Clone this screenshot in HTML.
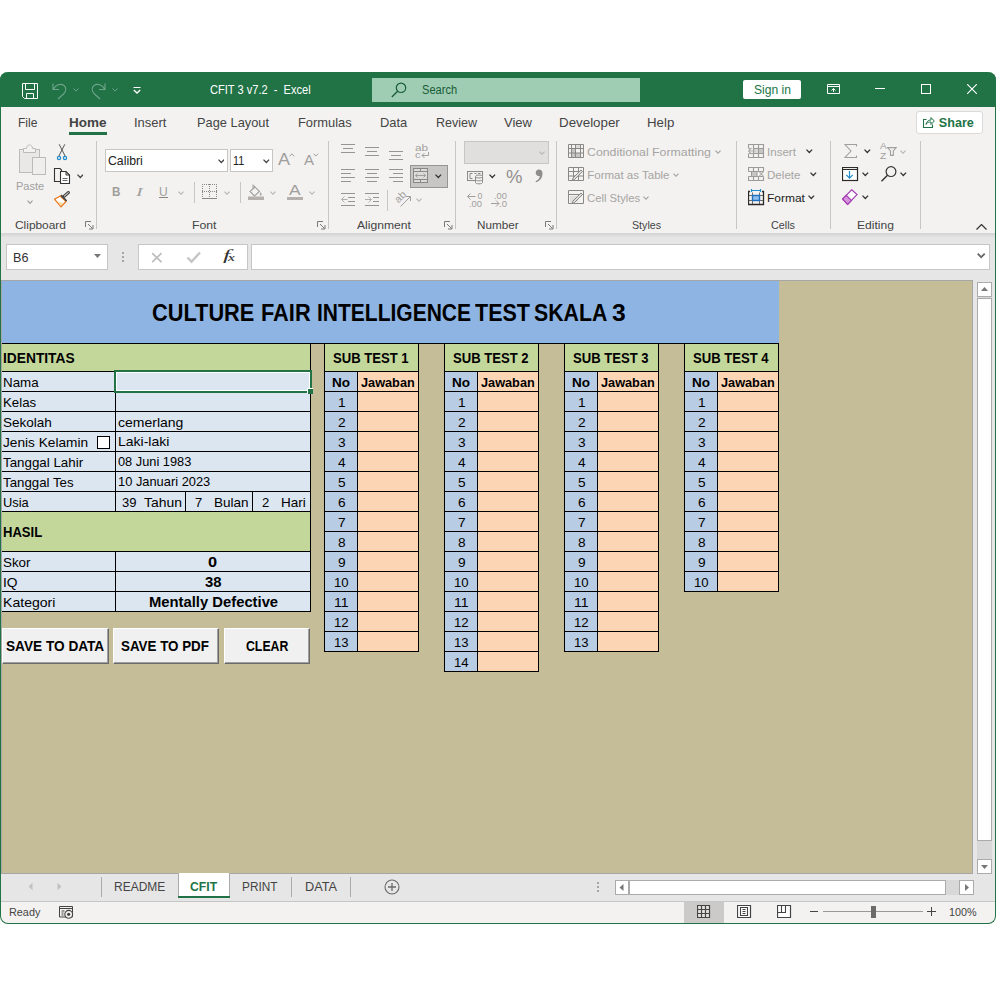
<!DOCTYPE html>
<html><head><meta charset="utf-8"><title>CFIT 3 v7.2 - Excel</title>
<style>
html,body{margin:0;padding:0;background:#fff;}
body{width:996px;height:996px;position:relative;overflow:hidden;font-family:"Liberation Sans",sans-serif;}
#win{position:absolute;left:0;top:72px;width:996px;height:852px;border-radius:8px;overflow:hidden;background:#f3f2f1;}
#in{position:absolute;left:0;top:-72px;width:996px;height:996px;}
#frame{position:absolute;left:0;top:72px;width:996px;height:852px;box-sizing:border-box;border:1px solid #217346;border-top:none;border-radius:8px;pointer-events:none;}
.r{position:absolute;display:block;}
.t{position:absolute;white-space:pre;line-height:1;transform-origin:0 50%;}
</style></head><body>
<div id="win"><div id="in">
<div class="r" style="left:0px;top:72px;width:996px;height:35px;background:#217346;"></div>
<svg class="r" style="left:22px;top:83px;" width="17" height="17" viewBox="0 0 17 17"><path d="M0.5 0.5h15v15h-13l-2-2z M3.5 0.5v6h9v-6 M4.5 15.5v-5h7v5" fill="none" stroke="#fff" stroke-width="1"/></svg>
<svg class="r" style="left:52px;top:82px;" width="17" height="18" viewBox="0 0 17 18"><path d="M1 1.5v6h6 M1.5 7c2-4 7-6 10.500-3.500c3 2.500 2 6-0.500 8.500l-5.500 5" fill="none" stroke="#6ea58a" stroke-width="1.1"/></svg>
<svg class="r" style="left:72.5px;top:88px;" width="7" height="5" viewBox="0 0 7 5"><path d="M0.500 0.500l2.600 2.500l2.600-2.500" fill="none" stroke="#6ea58a" stroke-width="1"/></svg>
<svg class="r" style="left:88.5px;top:82px;" width="17" height="18" viewBox="0 0 17 18"><path d="M16 1.500v6h-6 M15.500 7c-2-4-7-6-10.500-3.500c-3 2.500-2 6 0.500 8.500l5.500 5" fill="none" stroke="#6ea58a" stroke-width="1.1"/></svg>
<svg class="r" style="left:111.5px;top:88px;" width="7" height="5" viewBox="0 0 7 5"><path d="M0.500 0.500l2.600 2.500l2.600-2.500" fill="none" stroke="#6ea58a" stroke-width="1"/></svg>
<svg class="r" style="left:132.5px;top:86px;" width="8" height="8" viewBox="0 0 8 8"><path d="M0.500 1.500h7" stroke="#fff" stroke-width="1.100" fill="none"/><path d="M0.800 4l3.200 3l3.200-3" fill="none" stroke="#fff" stroke-width="1.300"/></svg>
<span class="t" style="left:209.51px;top:84.00px;font-size:12.3px;color:#fff;transform:scaleX(0.9002);">CFIT 3 v7.2  -  Excel</span>
<div class="r" style="left:372px;top:78px;width:268px;height:24px;background:#9fcdb3;"></div>
<svg class="r" style="left:391px;top:82px;" width="16" height="16" viewBox="0 0 16 16"><circle cx="10" cy="5.800" r="4.700" fill="none" stroke="#185c37" stroke-width="1.200"/><path d="M6.600 9.200l-5.800 5.800" stroke="#185c37" stroke-width="1.300"/></svg>
<span class="t" style="left:421.91px;top:84.00px;font-size:12.3px;color:#185c37;transform:scaleX(0.9003);">Search</span>
<div class="r" style="left:743px;top:80px;width:58px;height:19px;background:#fff;border-radius:2px;"></div>
<span class="t" style="left:753.51px;top:84.00px;font-size:12.3px;color:#217346;transform:scaleX(0.9834);">Sign in</span>
<svg class="r" style="left:827px;top:84px;" width="14" height="11" viewBox="0 0 14 11"><path d="M0.500 0.500h12v9h-12z M0.500 2.500h12" fill="none" stroke="#fff" stroke-width="1"/><path d="M6.500 8v-3.500 M4.500 6.500l2-2l2 2" fill="none" stroke="#fff" stroke-width="1"/></svg>
<div class="r" style="left:875px;top:88px;width:10px;height:1px;background:#fff;"></div>
<div class="r" style="left:921px;top:84px;width:10px;height:10px;border:1px solid #fff;box-sizing:border-box;"></div>
<svg class="r" style="left:967px;top:84px;" width="10" height="10" viewBox="0 0 10 10"><path d="M0 0l10 10M10 0l-10 10" stroke="#fff" stroke-width="1.100"/></svg>
<div class="r" style="left:0px;top:107px;width:996px;height:126px;background:#f3f2f1;"></div>
<span class="t" style="left:17.80px;top:117.00px;font-size:12.6px;color:#444444;transform:scaleX(0.9562);">File</span>
<span class="t" style="left:133.80px;top:117.00px;font-size:12.6px;color:#444444;transform:scaleX(1.0288);">Insert</span>
<span class="t" style="left:196.50px;top:117.00px;font-size:12.6px;color:#444444;transform:scaleX(1.0180);">Page Layout</span>
<span class="t" style="left:297.50px;top:117.00px;font-size:12.6px;color:#444444;transform:scaleX(1.0233);">Formulas</span>
<span class="t" style="left:379.90px;top:117.00px;font-size:12.6px;color:#444444;transform:scaleX(1.0263);">Data</span>
<span class="t" style="left:435.50px;top:117.00px;font-size:12.6px;color:#444444;transform:scaleX(0.9930);">Review</span>
<span class="t" style="left:503.50px;top:117.00px;font-size:12.6px;color:#444444;transform:scaleX(1.0343);">View</span>
<span class="t" style="left:558.70px;top:117.00px;font-size:12.6px;color:#444444;transform:scaleX(1.0593);">Developer</span>
<span class="t" style="left:646.80px;top:117.00px;font-size:12.6px;color:#444444;transform:scaleX(1.0541);">Help</span>
<span class="t" style="left:69.00px;top:117.00px;font-size:12.6px;font-weight:700;color:#444;transform:scaleX(1.0717);">Home</span>
<div class="r" style="left:69px;top:132px;width:38px;height:3px;background:#217346;"></div>
<div class="r" style="left:915.5px;top:110.5px;width:67px;height:23px;background:#fff;border:1px solid #dcdad8;box-sizing:border-box;border-radius:3px;"></div>
<svg class="r" style="left:923px;top:116px;" width="12" height="12" viewBox="0 0 12 12"><path d="M3.500 3.500h-3v8h9v-3" fill="none" stroke="#217346" stroke-width="1.100"/><path d="M3 8.500c0.500-3 2.500-4.500 5-4.500v-2.500l3.300 3.500l-3.300 3.500v-2.500c-2 0-3.500 0.500-5 2z" fill="none" stroke="#217346" stroke-width="1"/></svg>
<span class="t" style="left:938.80px;top:117.00px;font-size:12.6px;font-weight:700;color:#217346;">Share</span>
<svg class="r" style="left:19px;top:144px;" width="28" height="32" viewBox="0 0 28 32"><rect x="0.500" y="5.500" width="20" height="23" fill="#e9e8e7" stroke="#bdbbb9"/><path d="M4.500 8.500v-4h3c0-4.700 6-4.700 6 0h3v4z" fill="#f3f2f1" stroke="#bdbbb9"/><rect x="13.500" y="13.500" width="13" height="17" fill="#efeeed" stroke="#bdbbb9"/></svg>
<span class="t" style="left:16.03px;top:181.00px;font-size:11.8px;color:#a19f9d;transform:scaleX(0.9361);">Paste</span>
<svg class="r" style="left:26.5px;top:200px;" width="6" height="5" viewBox="0 0 6 5"><path d="M0.500 0.600l2.5 2.7l2.5 -2.7" fill="none" stroke="#a19f9d" stroke-width="1.2"/></svg>
<svg class="r" style="left:56px;top:144px;" width="12" height="17" viewBox="0 0 12 17"><path d="M3.200 0.300l6.200 12.300 M8.800 0.300l-6.200 12.300" fill="none" stroke="#555" stroke-width="1"/><circle cx="3" cy="14" r="1.600" fill="none" stroke="#1e8bcd" stroke-width="1.200"/><circle cx="9" cy="14" r="1.600" fill="none" stroke="#1e8bcd" stroke-width="1.200"/></svg>
<svg class="r" style="left:53px;top:167px;" width="18" height="18" viewBox="0 0 18 18"><path d="M7 14.500h-5.500v-13h5.500l1.500 1.500v1.500" fill="none" stroke="#333" stroke-width="1.100"/><path d="M7.500 4.500h5.500l3.500 3.500v8.500h-9z" fill="#fff" stroke="#333" stroke-width="1.100"/><path d="M13 4.500v3.500h3.500" fill="none" stroke="#333"/><path d="M9.500 11.500h5 M9.500 13.500h5" fill="none" stroke="#666"/></svg>
<svg class="r" style="left:76.5px;top:174px;" width="6.5" height="5.2" viewBox="0 0 6.5 5.2"><path d="M0.500 0.600l2.8 2.9l2.8 -2.9" fill="none" stroke="#444444" stroke-width="1.3"/></svg>
<svg class="r" style="left:54px;top:191px;" width="17" height="17" viewBox="0 0 17 17"><path d="M6.300 5l-5.800 3.200l6.500 7.600l5-5.300z" fill="#fff" stroke="#e8791d" stroke-width="1.300"/><path d="M3.500 10.500l3.500 4l2.500-2.500z" fill="#fbd9a5"/><path d="M14.300 1.600l-4.600 4" stroke="#444" stroke-width="3.200" stroke-linecap="round"/><path d="M14.300 1.600l-4 3.500" stroke="#f3f2f1" stroke-width="1" stroke-linecap="round"/><path d="M7 4.200l5.600 5.800" stroke="#444" stroke-width="1.700"/></svg>
<span class="t" style="left:15.24px;top:219.00px;font-size:11.6px;color:#444444;transform:scaleX(1.0263);">Clipboard</span>
<svg class="r" style="left:84.5px;top:220.5px;" width="9" height="9" viewBox="0 0 9 9"><path d="M0.500 6v-5.500h5.500" fill="none" stroke="#7a7978" stroke-width="1"/><path d="M3 3l4.500 4.500 M8 4v4h-4" fill="none" stroke="#7a7978" stroke-width="1"/></svg>
<div class="r" style="left:96px;top:141px;width:1px;height:88px;background:#c8c6c4;"></div>
<div class="r" style="left:105px;top:149px;width:123px;height:23px;background:#fff;border:1px solid #c8c6c4;box-sizing:border-box;"></div>
<span class="t" style="left:107.90px;top:155.00px;font-size:12.4px;color:#222;transform:scaleX(0.9905);">Calibri</span>
<svg class="r" style="left:217.8px;top:159px;" width="6.5" height="5.2" viewBox="0 0 6.5 5.2"><path d="M0.500 0.600l2.8 2.9l2.8 -2.9" fill="none" stroke="#444444" stroke-width="1.3"/></svg>
<div class="r" style="left:230px;top:149px;width:43px;height:23px;background:#fff;border:1px solid #c8c6c4;box-sizing:border-box;"></div>
<span class="t" style="left:233.40px;top:155.00px;font-size:12.4px;color:#222;transform:scaleX(0.8693);">11</span>
<svg class="r" style="left:263.0px;top:159px;" width="6.5" height="5.2" viewBox="0 0 6.5 5.2"><path d="M0.500 0.600l2.8 2.9l2.8 -2.9" fill="none" stroke="#444444" stroke-width="1.3"/></svg>
<span class="t" style="left:278.12px;top:151.00px;font-size:17px;color:#a19f9d;transform:scaleX(1.0631);">A</span>
<svg class="r" style="left:289px;top:152.5px;" width="6" height="4" viewBox="0 0 6 4"><path d="M0.500 3.300l2.300-2.500l2.300 2.500" fill="none" stroke="#a19f9d" stroke-width="1"/></svg>
<span class="t" style="left:304.04px;top:153.00px;font-size:14px;color:#a19f9d;transform:scaleX(1.0724);">A</span>
<svg class="r" style="left:313px;top:152.5px;" width="6" height="4" viewBox="0 0 6 4"><path d="M0.500 0.600l2.300 2.500l2.300-2.500" fill="none" stroke="#a19f9d" stroke-width="1"/></svg>
<span class="t" style="left:112.18px;top:185.00px;font-size:13px;font-weight:700;color:#a19f9d;transform:scaleX(0.8988);">B</span>
<span class="t" style="left:136.46px;top:185.00px;font-size:13.5px;font-style:italic;color:#a19f9d;transform:scaleX(1.5067);font-family:'Liberation Serif';">I</span>
<span class="t" style="left:159.29px;top:186.00px;font-size:12.8px;color:#a19f9d;transform:scaleX(0.9431);">U</span>
<div class="r" style="left:159px;top:197px;width:9px;height:1px;background:#8a8886;"></div>
<svg class="r" style="left:178.4px;top:191px;" width="6" height="5" viewBox="0 0 6 5"><path d="M0.500 0.600l2.5 2.7l2.5 -2.7" fill="none" stroke="#b5b3b1" stroke-width="1.1"/></svg>
<div class="r" style="left:194px;top:182px;width:1px;height:21px;background:#c8c6c4;"></div>
<svg class="r" style="left:202px;top:184px;" width="16" height="16" viewBox="0 0 16 16"><path d="M0.500 0v14 M7.500 0v14 M14.500 0v14 M0 0.500h15 M0 7.500h15" fill="none" stroke="#8a8886" stroke-width="1" stroke-dasharray="1 1" shape-rendering="crispEdges"/><path d="M0 14.500h15" stroke="#8a8886" stroke-width="1.300" shape-rendering="crispEdges"/></svg>
<svg class="r" style="left:224.3px;top:191px;" width="6" height="5" viewBox="0 0 6 5"><path d="M0.500 0.600l2.5 2.7l2.5 -2.7" fill="none" stroke="#b5b3b1" stroke-width="1.1"/></svg>
<div class="r" style="left:240px;top:182px;width:1px;height:21px;background:#c8c6c4;"></div>
<svg class="r" style="left:248px;top:184px;" width="16" height="16" viewBox="0 0 16 16"><path d="M5.500 1.500l6 6l-5 4.500l-4.500-4.500l5-4.500" fill="none" stroke="#a19f9d" stroke-width="1.100"/><path d="M5 0.500v4" stroke="#a19f9d" stroke-width="1"/><path d="M12.500 8c1.500 2 1.500 3.500 0.300 3.500c-1.200 0-1.200-1.500-0.300-3.500z" fill="#a19f9d"/><rect x="0" y="12.500" width="16" height="3.500" fill="#b3b0ad"/></svg>
<svg class="r" style="left:270.3px;top:191px;" width="6" height="5" viewBox="0 0 6 5"><path d="M0.500 0.600l2.5 2.7l2.5 -2.7" fill="none" stroke="#b5b3b1" stroke-width="1.1"/></svg>
<span class="t" style="left:289.42px;top:183.00px;font-size:14.5px;color:#a19f9d;transform:scaleX(1.2056);">A</span>
<div class="r" style="left:287px;top:196.5px;width:16px;height:3.5px;background:#b3b0ad;"></div>
<svg class="r" style="left:309.2px;top:191px;" width="6" height="5" viewBox="0 0 6 5"><path d="M0.500 0.600l2.5 2.7l2.5 -2.7" fill="none" stroke="#b5b3b1" stroke-width="1.1"/></svg>
<span class="t" style="left:191.94px;top:219.00px;font-size:11.6px;color:#444444;transform:scaleX(1.0571);">Font</span>
<svg class="r" style="left:316.5px;top:220.5px;" width="9" height="9" viewBox="0 0 9 9"><path d="M0.500 6v-5.500h5.500" fill="none" stroke="#7a7978" stroke-width="1"/><path d="M3 3l4.500 4.500 M8 4v4h-4" fill="none" stroke="#7a7978" stroke-width="1"/></svg>
<div class="r" style="left:328px;top:141px;width:1px;height:88px;background:#c8c6c4;"></div>
<div class="r" style="left:341.0px;top:144px;width:14px;height:1px;background:#979593;"></div>
<div class="r" style="left:343.0px;top:148px;width:10px;height:1px;background:#979593;"></div>
<div class="r" style="left:341.0px;top:152px;width:14px;height:1px;background:#979593;"></div>
<div class="r" style="left:365.0px;top:147px;width:14px;height:1px;background:#979593;"></div>
<div class="r" style="left:367.0px;top:151px;width:10px;height:1px;background:#979593;"></div>
<div class="r" style="left:365.0px;top:155px;width:14px;height:1px;background:#979593;"></div>
<div class="r" style="left:389.0px;top:151px;width:14px;height:1px;background:#979593;"></div>
<div class="r" style="left:391.0px;top:155px;width:10px;height:1px;background:#979593;"></div>
<div class="r" style="left:389.0px;top:159px;width:14px;height:1px;background:#979593;"></div>
<span class="t" style="left:415.22px;top:143.00px;font-size:9.5px;color:#a19f9d;transform:scaleX(1.2441);">ab</span>
<span class="t" style="left:415.22px;top:150.00px;font-size:9.5px;color:#a19f9d;transform:scaleX(1.1916);">c</span>
<svg class="r" style="left:421px;top:152px;" width="9" height="8" viewBox="0 0 9 8"><path d="M7.500 0v3.500h-6.500 M3.500 1l-2.500 2.500l2.500 2.500" fill="none" stroke="#a19f9d" stroke-width="1"/></svg>
<div class="r" style="left:341px;top:169px;width:14px;height:1px;background:#979593;"></div>
<div class="r" style="left:341px;top:173px;width:10px;height:1px;background:#979593;"></div>
<div class="r" style="left:341px;top:177px;width:14px;height:1px;background:#979593;"></div>
<div class="r" style="left:341px;top:181px;width:10px;height:1px;background:#979593;"></div>
<div class="r" style="left:365.0px;top:169px;width:14px;height:1px;background:#979593;"></div>
<div class="r" style="left:367.0px;top:173px;width:10px;height:1px;background:#979593;"></div>
<div class="r" style="left:365.0px;top:177px;width:14px;height:1px;background:#979593;"></div>
<div class="r" style="left:367.0px;top:181px;width:10px;height:1px;background:#979593;"></div>
<div class="r" style="left:389px;top:169px;width:14px;height:1px;background:#979593;"></div>
<div class="r" style="left:393px;top:173px;width:10px;height:1px;background:#979593;"></div>
<div class="r" style="left:389px;top:177px;width:14px;height:1px;background:#979593;"></div>
<div class="r" style="left:393px;top:181px;width:10px;height:1px;background:#979593;"></div>
<div class="r" style="left:410px;top:165px;width:38px;height:23px;background:#c8c6c4;border:1px solid #979593;box-sizing:border-box;"></div>
<svg class="r" style="left:413px;top:168px;" width="16" height="16" viewBox="0 0 16 16"><rect x="0.500" y="0.500" width="14" height="14" fill="#dddbd9" stroke="#8a8886"/><path d="M0.500 3.500h14 M0.500 11.500h14 M7.500 0.500v3 M7.500 11.500v3" fill="none" stroke="#8a8886" stroke-width="1"/><path d="M2.500 7.500h10 M4.500 5.500l-2 2l2 2 M10.500 5.500l2 2l-2 2" fill="none" stroke="#a19f9d" stroke-width="1"/></svg>
<svg class="r" style="left:435.0px;top:174px;" width="6.5" height="5.2" viewBox="0 0 6.5 5.2"><path d="M0.500 0.600l2.8 2.9l2.8 -2.9" fill="none" stroke="#333" stroke-width="1.3"/></svg>
<div class="r" style="left:341px;top:193px;width:14px;height:1px;background:#979593;"></div>
<div class="r" style="left:341px;top:205px;width:14px;height:1px;background:#979593;"></div>
<div class="r" style="left:348px;top:197px;width:7px;height:1px;background:#979593;"></div>
<div class="r" style="left:348px;top:201px;width:7px;height:1px;background:#979593;"></div>
<svg class="r" style="left:341px;top:195px;" width="7" height="9" viewBox="0 0 7 9"><path d="M6.500 4.500h-6 M3.500 1.500l-3 3l3 3" fill="none" stroke="#b1afad" stroke-width="1"/></svg>
<div class="r" style="left:365px;top:193px;width:14px;height:1px;background:#979593;"></div>
<div class="r" style="left:365px;top:205px;width:14px;height:1px;background:#979593;"></div>
<div class="r" style="left:373px;top:197px;width:6px;height:1px;background:#979593;"></div>
<div class="r" style="left:373px;top:201px;width:6px;height:1px;background:#979593;"></div>
<svg class="r" style="left:365px;top:195px;" width="8" height="9" viewBox="0 0 8 9"><path d="M0 4.500h6.500 M3.500 1.500l3 3l-3 3" fill="none" stroke="#b1afad" stroke-width="1"/></svg>
<div class="r" style="left:387px;top:190px;width:1px;height:21px;background:#c8c6c4;"></div>
<svg class="r" style="left:394px;top:188px;" width="20" height="20" viewBox="0 0 20 20"><path d="M6.500 18.500l10-10 M12 8.500h4.500v4.500" fill="none" stroke="#a19f9d" stroke-width="1"/><text x="0" y="0" font-family="Liberation Sans" font-size="10.500" fill="#a19f9d" transform="translate(4.500 15.500) rotate(-45)">ab</text></svg>
<svg class="r" style="left:415.7px;top:198px;" width="6" height="5" viewBox="0 0 6 5"><path d="M0.500 0.600l2.5 2.7l2.5 -2.7" fill="none" stroke="#b5b3b1" stroke-width="1.1"/></svg>
<span class="t" style="left:356.54px;top:219.00px;font-size:11.6px;color:#444444;transform:scaleX(1.0459);">Alignment</span>
<svg class="r" style="left:443.6px;top:220.5px;" width="9" height="9" viewBox="0 0 9 9"><path d="M0.500 6v-5.500h5.500" fill="none" stroke="#7a7978" stroke-width="1"/><path d="M3 3l4.500 4.500 M8 4v4h-4" fill="none" stroke="#7a7978" stroke-width="1"/></svg>
<div class="r" style="left:455px;top:141px;width:1px;height:88px;background:#c8c6c4;"></div>
<div class="r" style="left:464px;top:141px;width:85px;height:23px;background:#e1dfdd;border:1px solid #c8c6c4;box-sizing:border-box;"></div>
<svg class="r" style="left:539.1px;top:151px;" width="6" height="5" viewBox="0 0 6 5"><path d="M0.500 0.600l2.5 2.7l2.5 -2.7" fill="none" stroke="#b5b3b1" stroke-width="1.1"/></svg>
<svg class="r" style="left:467px;top:171px;" width="17" height="14" viewBox="0 0 17 14"><rect x="0.500" y="0.500" width="15" height="9" fill="none" stroke="#8f8d8b" stroke-width="1.100"/><path d="M5.500 2.500h-2.500v5h2.500 M7.500 2.500h2 M11 2.500h2.500" fill="none" stroke="#8f8d8b"/><path d="M8.500 5.500v6c0 1.800 7 1.800 7 0v-6" fill="#f3f2f1" stroke="none"/><ellipse cx="12" cy="5.500" rx="3.500" ry="1.500" fill="#f3f2f1" stroke="#8f8d8b"/><path d="M8.500 5.500v6c0 1.800 7 1.800 7 0v-6 M8.500 8.500c0 1.800 7 1.800 7 0" fill="none" stroke="#8f8d8b"/></svg>
<svg class="r" style="left:489.1px;top:174px;" width="6.5" height="5.2" viewBox="0 0 6.5 5.2"><path d="M0.500 0.600l2.8 2.9l2.8 -2.9" fill="none" stroke="#333" stroke-width="1.3"/></svg>
<span class="t" style="left:505.68px;top:168.00px;font-size:18px;color:#918f8d;transform:scaleX(1.0265);">%</span>
<svg class="r" style="left:534px;top:169px;" width="10" height="14" viewBox="0 0 10 14"><path d="M5 0.500a3.300 3.300 0 1 0 0.800 6.500c-0.300 2.500-1.800 4.300-4.300 5.200l0.500 1c4-1.200 6.500-4.500 6.500-8.800c0-2.400-1.500-3.900-3.500-3.900z" fill="#8f8d8b"/></svg>
<svg class="r" style="left:467px;top:193px;" width="9" height="8" viewBox="0 0 9 8"><path d="M8.500 3.500h-8 M3.500 0.500l-3 3l3 3" fill="none" stroke="#a19f9d"/></svg>
<span class="t" style="left:477.45px;top:192.00px;font-size:8.8px;color:#a19f9d;">0</span>
<span class="t" style="left:469.25px;top:200.00px;font-size:8.8px;color:#a19f9d;transform:scaleX(1.0711);">.00</span>
<span class="t" style="left:493.55px;top:192.00px;font-size:8.8px;color:#a19f9d;transform:scaleX(1.0629);">.00</span>
<svg class="r" style="left:491px;top:200px;" width="9" height="8" viewBox="0 0 9 8"><path d="M0 3.500h8 M5 0.500l3 3l-3 3" fill="none" stroke="#a19f9d"/></svg>
<span class="t" style="left:498.65px;top:200.00px;font-size:8.8px;color:#a19f9d;transform:scaleX(1.0763);">.0</span>
<span class="t" style="left:477.24px;top:219.00px;font-size:11.6px;color:#444444;transform:scaleX(1.0092);">Number</span>
<svg class="r" style="left:545px;top:220.5px;" width="9" height="9" viewBox="0 0 9 9"><path d="M0.500 6v-5.500h5.500" fill="none" stroke="#7a7978" stroke-width="1"/><path d="M3 3l4.500 4.500 M8 4v4h-4" fill="none" stroke="#7a7978" stroke-width="1"/></svg>
<div class="r" style="left:556px;top:141px;width:1px;height:88px;background:#c8c6c4;"></div>
<svg class="r" style="left:568px;top:144px;" width="17" height="15" viewBox="0 0 17 15"><path d="M3.500 5h4v4h5v4h-9z" fill="#c8c6c4"/><path d="M7.500 1h5v4h-5z" fill="#dddbd9"/><path d="M0.500 0.500h15v13h-15z M0.500 4.500h15 M0.500 9h15 M3.500 0.500v13 M7.500 0.500v13 M12.500 0.500v13" fill="none" stroke="#8a8886"/></svg>
<span class="t" style="left:587.24px;top:147.00px;font-size:11.5px;color:#a6a4a2;transform:scaleX(1.0710);">Conditional Formatting</span>
<svg class="r" style="left:714.5px;top:150px;" width="6" height="5" viewBox="0 0 6 5"><path d="M0.500 0.600l2.5 2.7l2.5 -2.7" fill="none" stroke="#a19f9d" stroke-width="1.1"/></svg>
<svg class="r" style="left:568px;top:167px;" width="17" height="15" viewBox="0 0 17 15"><path d="M0.500 0.500h15v13h-15z M0.500 4.500h15 M0.500 9h15 M5.500 0.500v13 M10.500 0.500v13" fill="none" stroke="#8a8886"/><path d="M14.500 4.500l-8 8l-2.500 1l1-2.500l8-8z" fill="#e1dfdd" stroke="#8a8886"/></svg>
<span class="t" style="left:587.24px;top:170.00px;font-size:11.5px;color:#a6a4a2;">Format as Table</span>
<svg class="r" style="left:672.8px;top:173px;" width="6" height="5" viewBox="0 0 6 5"><path d="M0.500 0.600l2.5 2.7l2.5 -2.7" fill="none" stroke="#a19f9d" stroke-width="1.1"/></svg>
<svg class="r" style="left:568px;top:189.5px;" width="17" height="15" viewBox="0 0 17 15"><path d="M0.500 0.500h15v13h-15z M0.500 4.500h15" fill="none" stroke="#8a8886"/><path d="M2 6h8v6h-8z" fill="#e1dfdd"/><path d="M14.500 4.500l-8 8l-2.500 1l1-2.500l8-8z" fill="#e1dfdd" stroke="#8a8886"/></svg>
<span class="t" style="left:587.24px;top:193.00px;font-size:11.5px;color:#a6a4a2;transform:scaleX(0.9796);">Cell Styles</span>
<svg class="r" style="left:643.3px;top:196px;" width="6" height="5" viewBox="0 0 6 5"><path d="M0.500 0.600l2.5 2.7l2.5 -2.7" fill="none" stroke="#a19f9d" stroke-width="1.1"/></svg>
<span class="t" style="left:631.94px;top:219.00px;font-size:11.6px;color:#444444;transform:scaleX(0.9192);">Styles</span>
<div class="r" style="left:736px;top:141px;width:1px;height:88px;background:#c8c6c4;"></div>
<svg class="r" style="left:748px;top:144px;" width="17" height="15" viewBox="0 0 17 15"><rect x="5.500" y="4.500" width="5" height="5" fill="#dddbd9"/><rect x="10.500" y="4.500" width="5" height="5" fill="#c8c6c4"/><path d="M0.500 4v-3.500h15v13h-15v-3.500 M5.500 0.500v13 M10.500 0.500v13 M5.500 4.500h10 M0.500 9.500h15 M0.500 4.500h2" fill="none" stroke="#9d9b99" stroke-width="1.100"/><path d="M0.500 7h7 M3.500 4l-3 3l3 3" fill="none" stroke="#b1afad" stroke-width="1.100"/></svg>
<span class="t" style="left:767.34px;top:147.00px;font-size:11.5px;color:#a6a4a2;transform:scaleX(1.0054);">Insert</span>
<svg class="r" style="left:806.1px;top:149px;" width="6.5" height="5.2" viewBox="0 0 6.5 5.2"><path d="M0.500 0.600l2.8 2.9l2.8 -2.9" fill="none" stroke="#333" stroke-width="1.3"/></svg>
<svg class="r" style="left:748px;top:167px;" width="17" height="15" viewBox="0 0 17 15"><path d="M0.500 4.500v-4h15v4 M0.500 9.500v4h15v-4 M0.500 4.500h15 M0.500 9.500h15 M5.500 0.500v4 M10.500 0.500v4 M5.500 9.500v4 M10.500 9.500v4" fill="none" stroke="#9d9b99" stroke-width="1.100"/><rect x="3.500" y="4.500" width="5.500" height="5" fill="#c8c6c4" stroke="#9d9b99"/><path d="M11 4.300l4.700 5.400 M15.700 4.300l-4.700 5.400" stroke="#b1afad" stroke-width="1.100"/></svg>
<span class="t" style="left:767.34px;top:170.00px;font-size:11.5px;color:#a6a4a2;transform:scaleX(1.0081);">Delete</span>
<svg class="r" style="left:810.2px;top:172px;" width="6.5" height="5.2" viewBox="0 0 6.5 5.2"><path d="M0.500 0.600l2.8 2.9l2.8 -2.9" fill="none" stroke="#333" stroke-width="1.3"/></svg>
<svg class="r" style="left:748px;top:189px;" width="17" height="17" viewBox="0 0 17 17"><path d="M3 1.500h10 M3.500 0v3 M12.500 0v3" stroke="#1e8bcd" stroke-width="1.200" fill="none"/><path d="M4.500 3.500v12 M11.500 3.500v12 M0.500 6.500h15 M0.500 11.500h15" fill="none" stroke="#6e6c6a"/><path d="M2 2.500h-1.500v13h15v-13h-1.500" fill="none" stroke="#2b2a29" stroke-width="1.300"/><rect x="4.500" y="6.500" width="7" height="5" fill="#8ebdea" stroke="#1e6fc0" stroke-width="1.400"/></svg>
<span class="t" style="left:767.33px;top:193.00px;font-size:11.8px;color:#222;transform:scaleX(1.0152);">Format</span>
<svg class="r" style="left:808.3px;top:195px;" width="6.5" height="5.2" viewBox="0 0 6.5 5.2"><path d="M0.500 0.600l2.8 2.9l2.8 -2.9" fill="none" stroke="#333" stroke-width="1.3"/></svg>
<span class="t" style="left:770.94px;top:219.00px;font-size:11.6px;color:#444444;transform:scaleX(0.9320);">Cells</span>
<div class="r" style="left:830px;top:141px;width:1px;height:88px;background:#c8c6c4;"></div>
<svg class="r" style="left:843.5px;top:144px;" width="14" height="14" viewBox="0 0 14 14"><path d="M12.500 2.500v-2h-11.500l6 6.500l-6 6.500h11.500v-2" fill="none" stroke="#a19f9d" stroke-width="1.100"/></svg>
<svg class="r" style="left:864.0px;top:149px;" width="6.5" height="5.2" viewBox="0 0 6.5 5.2"><path d="M0.500 0.600l2.8 2.9l2.8 -2.9" fill="none" stroke="#333" stroke-width="1.3"/></svg>
<span class="t" style="left:879.86px;top:142.00px;font-size:8.4px;color:#a19f9d;transform:scaleX(1.1928);">A</span>
<span class="t" style="left:880.06px;top:152.00px;font-size:8.4px;color:#a19f9d;transform:scaleX(1.2238);">Z</span>
<svg class="r" style="left:887px;top:147px;" width="10" height="10" viewBox="0 0 10 10"><path d="M0.600 0.600h8.600l-2.900 3.400v4.400h-2.800v-4.400z" fill="none" stroke="#a19f9d" stroke-width="1.100"/></svg>
<svg class="r" style="left:900.3px;top:150px;" width="6" height="5" viewBox="0 0 6 5"><path d="M0.500 0.600l2.5 2.7l2.5 -2.7" fill="none" stroke="#b5b3b1" stroke-width="1.1"/></svg>
<svg class="r" style="left:842px;top:167px;" width="17" height="15" viewBox="0 0 17 15"><rect x="0.500" y="0.500" width="15" height="13" fill="#fff" stroke="#2b2a29" stroke-width="1.200"/><path d="M0.500 2.500h15" stroke="#2b2a29"/><path d="M7.500 4v7 M4.300 7.800l3.200 3.300l3.200-3.300" fill="none" stroke="#1e8bcd" stroke-width="1.200"/></svg>
<svg class="r" style="left:862.2px;top:172px;" width="6.5" height="5.2" viewBox="0 0 6.5 5.2"><path d="M0.500 0.600l2.8 2.9l2.8 -2.9" fill="none" stroke="#333" stroke-width="1.3"/></svg>
<svg class="r" style="left:880.5px;top:166px;" width="17" height="16" viewBox="0 0 17 16"><circle cx="10" cy="5.600" r="4.900" fill="none" stroke="#333" stroke-width="1.200"/><path d="M6.500 9.300l-6 6" stroke="#333" stroke-width="1.400"/></svg>
<svg class="r" style="left:900.4px;top:172px;" width="6.5" height="5.2" viewBox="0 0 6.5 5.2"><path d="M0.500 0.600l2.8 2.9l2.8 -2.9" fill="none" stroke="#333" stroke-width="1.3"/></svg>
<svg class="r" style="left:842px;top:189px;" width="17" height="17" viewBox="0 0 17 17"><path d="M9.700 0.800l5.300 4.800l-9.400 9.700l-5-5.300z" fill="#fff" stroke="#a33fb0" stroke-width="1.200"/><path d="M4.200 6.300l5.200 5.100l-3.800 3.900l-5-5.300z" fill="#d694de" stroke="#a33fb0" stroke-width="1.200"/></svg>
<svg class="r" style="left:862.2px;top:195px;" width="6.5" height="5.2" viewBox="0 0 6.5 5.2"><path d="M0.500 0.600l2.8 2.9l2.8 -2.9" fill="none" stroke="#333" stroke-width="1.3"/></svg>
<span class="t" style="left:857.04px;top:219.00px;font-size:11.6px;color:#444444;transform:scaleX(1.0388);">Editing</span>
<div class="r" style="left:920px;top:141px;width:1px;height:88px;background:#c8c6c4;"></div>
<svg class="r" style="left:976px;top:224px;" width="11" height="6" viewBox="0 0 11 6"><path d="M0.500 5.500l5-5l5 5" fill="none" stroke="#333" stroke-width="1.200"/></svg>
<div class="r" style="left:0px;top:233px;width:996px;height:47px;background:#e6e6e6;"></div>
<div class="r" style="left:0px;top:233px;width:996px;height:5px;background:linear-gradient(#d3d3d3,#e6e6e6);"></div>
<div class="r" style="left:6px;top:244px;width:102px;height:26px;background:#fff;border:1px solid #c6c6c6;box-sizing:border-box;"></div>
<span class="t" style="left:13.02px;top:252.00px;font-size:12px;color:#333;transform:scaleX(1.0526);">B6</span>
<svg class="r" style="left:94px;top:254px;" width="8" height="5" viewBox="0 0 8 5"><path d="M0 0h7l-3.500 4z" fill="#777"/></svg>
<div class="r" style="left:122px;top:252px;width:2px;height:2px;background:#a6a6a6;"></div>
<div class="r" style="left:122px;top:256px;width:2px;height:2px;background:#a6a6a6;"></div>
<div class="r" style="left:122px;top:260px;width:2px;height:2px;background:#a6a6a6;"></div>
<div class="r" style="left:138px;top:244px;width:110px;height:26px;background:#fff;border:1px solid #c6c6c6;box-sizing:border-box;"></div>
<svg class="r" style="left:151px;top:252px;" width="12" height="11" viewBox="0 0 12 11"><path d="M1.200 1.200l9.300 9 M10.500 1.200l-9.300 9" stroke="#bdbdbd" stroke-width="1.700" fill="none"/></svg>
<svg class="r" style="left:186px;top:251px;" width="16" height="13" viewBox="0 0 16 13"><path d="M1.500 6.500l4 4.200l8.500-9.200" stroke="#c6c6c6" stroke-width="2.400" fill="none"/></svg>
<span class="t" style="left:223.00px;top:248.00px;font-size:15px;font-style:italic;color:#333;transform:scaleX(1.7738);font-family:'Liberation Serif';">f</span>
<span class="t" style="left:228.38px;top:253.00px;font-size:10.5px;font-weight:700;font-style:italic;color:#444;transform:scaleX(1.3029);font-family:'Liberation Serif';">x</span>
<div class="r" style="left:251px;top:244px;width:739px;height:26px;background:#fff;border:1px solid #c6c6c6;box-sizing:border-box;"></div>
<svg class="r" style="left:977px;top:253px;" width="9" height="6" viewBox="0 0 9 6"><path d="M0.700 0.700l3.500 3.500l3.500-3.500" fill="none" stroke="#666" stroke-width="1.800"/></svg>
<div class="r" style="left:1px;top:280px;width:972px;height:594px;background:#a6a6a6;"></div>
<div class="r" style="left:2px;top:281px;width:970px;height:592px;background:#c4bd97;"></div>
<div class="r" style="left:2px;top:281px;width:777px;height:62px;background:#8db4e2;"></div>
<span class="t" style="left:151.53px;top:301.00px;font-size:24.2px;font-weight:700;transform:scaleX(0.8995);">CULTURE</span>
<span class="t" style="left:260.73px;top:301.00px;font-size:24.2px;font-weight:700;transform:scaleX(0.9007);">FAIR</span>
<span class="t" style="left:317.23px;top:301.00px;font-size:24.2px;font-weight:700;transform:scaleX(0.8683);">INTELLIGENCE</span>
<span class="t" style="left:474.83px;top:301.00px;font-size:24.2px;font-weight:700;transform:scaleX(0.8885);">TEST</span>
<span class="t" style="left:534.13px;top:301.00px;font-size:24.2px;font-weight:700;transform:scaleX(0.8791);">SKALA</span>
<span class="t" style="left:611.93px;top:301.00px;font-size:24.2px;font-weight:700;transform:scaleX(1.0210);">3</span>
<div class="r" style="left:2px;top:344px;width:308px;height:27px;background:#c4d79b;"></div>
<div class="r" style="left:2px;top:372px;width:308px;height:139px;background:#dce6f1;"></div>
<div class="r" style="left:2px;top:512px;width:308px;height:39px;background:#c4d79b;"></div>
<div class="r" style="left:2px;top:552px;width:308px;height:59px;background:#dce6f1;"></div>
<div class="r" style="left:2px;top:343px;width:777px;height:1px;background:#000;"></div>
<div class="r" style="left:2px;top:371px;width:309px;height:1px;background:#000;"></div>
<div class="r" style="left:2px;top:391px;width:309px;height:1px;background:#000;"></div>
<div class="r" style="left:2px;top:411px;width:309px;height:1px;background:#000;"></div>
<div class="r" style="left:2px;top:431px;width:309px;height:1px;background:#000;"></div>
<div class="r" style="left:2px;top:451px;width:309px;height:1px;background:#000;"></div>
<div class="r" style="left:2px;top:471px;width:309px;height:1px;background:#000;"></div>
<div class="r" style="left:2px;top:491px;width:309px;height:1px;background:#000;"></div>
<div class="r" style="left:2px;top:511px;width:309px;height:1px;background:#000;"></div>
<div class="r" style="left:2px;top:551px;width:309px;height:1px;background:#000;"></div>
<div class="r" style="left:2px;top:571px;width:309px;height:1px;background:#000;"></div>
<div class="r" style="left:2px;top:591px;width:309px;height:1px;background:#000;"></div>
<div class="r" style="left:2px;top:611px;width:309px;height:1px;background:#000;"></div>
<div class="r" style="left:310px;top:343px;width:1px;height:269px;background:#000;"></div>
<div class="r" style="left:115px;top:371px;width:1px;height:140px;background:#000;"></div>
<div class="r" style="left:115px;top:551px;width:1px;height:60px;background:#000;"></div>
<div class="r" style="left:185px;top:491px;width:1px;height:20px;background:#000;"></div>
<div class="r" style="left:252px;top:491px;width:1px;height:20px;background:#000;"></div>
<div class="r" style="left:325px;top:344px;width:93px;height:27px;background:#c4d79b;"></div>
<div class="r" style="left:325px;top:372px;width:32px;height:279px;background:#b8cce4;"></div>
<div class="r" style="left:358px;top:372px;width:60px;height:19px;background:#fcd5b4;"></div>
<div class="r" style="left:358px;top:392px;width:60px;height:259px;background:#fcd5b4;"></div>
<div class="r" style="left:324px;top:343px;width:1px;height:309px;background:#000;"></div>
<div class="r" style="left:418px;top:343px;width:1px;height:309px;background:#000;"></div>
<div class="r" style="left:357px;top:371px;width:1px;height:281px;background:#000;"></div>
<div class="r" style="left:324px;top:371px;width:95px;height:1px;background:#000;"></div>
<div class="r" style="left:324px;top:391px;width:95px;height:1px;background:#000;"></div>
<div class="r" style="left:324px;top:411px;width:95px;height:1px;background:#000;"></div>
<div class="r" style="left:324px;top:431px;width:95px;height:1px;background:#000;"></div>
<div class="r" style="left:324px;top:451px;width:95px;height:1px;background:#000;"></div>
<div class="r" style="left:324px;top:471px;width:95px;height:1px;background:#000;"></div>
<div class="r" style="left:324px;top:491px;width:95px;height:1px;background:#000;"></div>
<div class="r" style="left:324px;top:511px;width:95px;height:1px;background:#000;"></div>
<div class="r" style="left:324px;top:531px;width:95px;height:1px;background:#000;"></div>
<div class="r" style="left:324px;top:551px;width:95px;height:1px;background:#000;"></div>
<div class="r" style="left:324px;top:571px;width:95px;height:1px;background:#000;"></div>
<div class="r" style="left:324px;top:591px;width:95px;height:1px;background:#000;"></div>
<div class="r" style="left:324px;top:611px;width:95px;height:1px;background:#000;"></div>
<div class="r" style="left:324px;top:631px;width:95px;height:1px;background:#000;"></div>
<div class="r" style="left:324px;top:651px;width:95px;height:1px;background:#000;"></div>
<span class="t" style="left:333.24px;top:351.00px;font-size:14px;font-weight:700;transform:scaleX(0.9347);">SUB TEST 1</span>
<span class="t" style="left:331.97px;top:376.00px;font-size:13.2px;font-weight:700;transform:scaleX(1.0263);">No</span>
<span class="t" style="left:361.47px;top:376.00px;font-size:13.2px;font-weight:700;transform:scaleX(0.9648);">Jawaban</span>
<span class="t" style="left:337.79px;top:397.00px;font-size:12.8px;transform:scaleX(1.0700);">1</span>
<span class="t" style="left:337.79px;top:417.00px;font-size:12.8px;transform:scaleX(1.0700);">2</span>
<span class="t" style="left:337.79px;top:437.00px;font-size:12.8px;transform:scaleX(1.0700);">3</span>
<span class="t" style="left:337.79px;top:457.00px;font-size:12.8px;transform:scaleX(1.0700);">4</span>
<span class="t" style="left:337.79px;top:477.00px;font-size:12.8px;transform:scaleX(1.0700);">5</span>
<span class="t" style="left:337.79px;top:497.00px;font-size:12.8px;transform:scaleX(1.0700);">6</span>
<span class="t" style="left:337.79px;top:517.00px;font-size:12.8px;transform:scaleX(1.0700);">7</span>
<span class="t" style="left:337.79px;top:537.00px;font-size:12.8px;transform:scaleX(1.0700);">8</span>
<span class="t" style="left:337.79px;top:557.00px;font-size:12.8px;transform:scaleX(1.0700);">9</span>
<span class="t" style="left:334.29px;top:577.00px;font-size:12.8px;transform:scaleX(1.0274);">10</span>
<span class="t" style="left:334.29px;top:597.00px;font-size:12.8px;transform:scaleX(1.0998);">11</span>
<span class="t" style="left:334.29px;top:617.00px;font-size:12.8px;transform:scaleX(1.0274);">12</span>
<span class="t" style="left:334.29px;top:637.00px;font-size:12.8px;transform:scaleX(1.0274);">13</span>
<div class="r" style="left:445px;top:344px;width:93px;height:27px;background:#c4d79b;"></div>
<div class="r" style="left:445px;top:372px;width:32px;height:299px;background:#b8cce4;"></div>
<div class="r" style="left:478px;top:372px;width:60px;height:19px;background:#fcd5b4;"></div>
<div class="r" style="left:478px;top:392px;width:60px;height:279px;background:#fcd5b4;"></div>
<div class="r" style="left:444px;top:343px;width:1px;height:329px;background:#000;"></div>
<div class="r" style="left:538px;top:343px;width:1px;height:329px;background:#000;"></div>
<div class="r" style="left:477px;top:371px;width:1px;height:301px;background:#000;"></div>
<div class="r" style="left:444px;top:371px;width:95px;height:1px;background:#000;"></div>
<div class="r" style="left:444px;top:391px;width:95px;height:1px;background:#000;"></div>
<div class="r" style="left:444px;top:411px;width:95px;height:1px;background:#000;"></div>
<div class="r" style="left:444px;top:431px;width:95px;height:1px;background:#000;"></div>
<div class="r" style="left:444px;top:451px;width:95px;height:1px;background:#000;"></div>
<div class="r" style="left:444px;top:471px;width:95px;height:1px;background:#000;"></div>
<div class="r" style="left:444px;top:491px;width:95px;height:1px;background:#000;"></div>
<div class="r" style="left:444px;top:511px;width:95px;height:1px;background:#000;"></div>
<div class="r" style="left:444px;top:531px;width:95px;height:1px;background:#000;"></div>
<div class="r" style="left:444px;top:551px;width:95px;height:1px;background:#000;"></div>
<div class="r" style="left:444px;top:571px;width:95px;height:1px;background:#000;"></div>
<div class="r" style="left:444px;top:591px;width:95px;height:1px;background:#000;"></div>
<div class="r" style="left:444px;top:611px;width:95px;height:1px;background:#000;"></div>
<div class="r" style="left:444px;top:631px;width:95px;height:1px;background:#000;"></div>
<div class="r" style="left:444px;top:651px;width:95px;height:1px;background:#000;"></div>
<div class="r" style="left:444px;top:671px;width:95px;height:1px;background:#000;"></div>
<span class="t" style="left:453.24px;top:351.00px;font-size:14px;font-weight:700;transform:scaleX(0.9347);">SUB TEST 2</span>
<span class="t" style="left:451.97px;top:376.00px;font-size:13.2px;font-weight:700;transform:scaleX(1.0263);">No</span>
<span class="t" style="left:481.47px;top:376.00px;font-size:13.2px;font-weight:700;transform:scaleX(0.9648);">Jawaban</span>
<span class="t" style="left:457.79px;top:397.00px;font-size:12.8px;transform:scaleX(1.0700);">1</span>
<span class="t" style="left:457.79px;top:417.00px;font-size:12.8px;transform:scaleX(1.0700);">2</span>
<span class="t" style="left:457.79px;top:437.00px;font-size:12.8px;transform:scaleX(1.0700);">3</span>
<span class="t" style="left:457.79px;top:457.00px;font-size:12.8px;transform:scaleX(1.0700);">4</span>
<span class="t" style="left:457.79px;top:477.00px;font-size:12.8px;transform:scaleX(1.0700);">5</span>
<span class="t" style="left:457.79px;top:497.00px;font-size:12.8px;transform:scaleX(1.0700);">6</span>
<span class="t" style="left:457.79px;top:517.00px;font-size:12.8px;transform:scaleX(1.0700);">7</span>
<span class="t" style="left:457.79px;top:537.00px;font-size:12.8px;transform:scaleX(1.0700);">8</span>
<span class="t" style="left:457.79px;top:557.00px;font-size:12.8px;transform:scaleX(1.0700);">9</span>
<span class="t" style="left:454.29px;top:577.00px;font-size:12.8px;transform:scaleX(1.0274);">10</span>
<span class="t" style="left:454.29px;top:597.00px;font-size:12.8px;transform:scaleX(1.0998);">11</span>
<span class="t" style="left:454.29px;top:617.00px;font-size:12.8px;transform:scaleX(1.0274);">12</span>
<span class="t" style="left:454.29px;top:637.00px;font-size:12.8px;transform:scaleX(1.0274);">13</span>
<span class="t" style="left:454.29px;top:657.00px;font-size:12.8px;transform:scaleX(1.0274);">14</span>
<div class="r" style="left:565px;top:344px;width:93px;height:27px;background:#c4d79b;"></div>
<div class="r" style="left:565px;top:372px;width:32px;height:279px;background:#b8cce4;"></div>
<div class="r" style="left:598px;top:372px;width:60px;height:19px;background:#fcd5b4;"></div>
<div class="r" style="left:598px;top:392px;width:60px;height:259px;background:#fcd5b4;"></div>
<div class="r" style="left:564px;top:343px;width:1px;height:309px;background:#000;"></div>
<div class="r" style="left:658px;top:343px;width:1px;height:309px;background:#000;"></div>
<div class="r" style="left:597px;top:371px;width:1px;height:281px;background:#000;"></div>
<div class="r" style="left:564px;top:371px;width:95px;height:1px;background:#000;"></div>
<div class="r" style="left:564px;top:391px;width:95px;height:1px;background:#000;"></div>
<div class="r" style="left:564px;top:411px;width:95px;height:1px;background:#000;"></div>
<div class="r" style="left:564px;top:431px;width:95px;height:1px;background:#000;"></div>
<div class="r" style="left:564px;top:451px;width:95px;height:1px;background:#000;"></div>
<div class="r" style="left:564px;top:471px;width:95px;height:1px;background:#000;"></div>
<div class="r" style="left:564px;top:491px;width:95px;height:1px;background:#000;"></div>
<div class="r" style="left:564px;top:511px;width:95px;height:1px;background:#000;"></div>
<div class="r" style="left:564px;top:531px;width:95px;height:1px;background:#000;"></div>
<div class="r" style="left:564px;top:551px;width:95px;height:1px;background:#000;"></div>
<div class="r" style="left:564px;top:571px;width:95px;height:1px;background:#000;"></div>
<div class="r" style="left:564px;top:591px;width:95px;height:1px;background:#000;"></div>
<div class="r" style="left:564px;top:611px;width:95px;height:1px;background:#000;"></div>
<div class="r" style="left:564px;top:631px;width:95px;height:1px;background:#000;"></div>
<div class="r" style="left:564px;top:651px;width:95px;height:1px;background:#000;"></div>
<span class="t" style="left:573.24px;top:351.00px;font-size:14px;font-weight:700;transform:scaleX(0.9347);">SUB TEST 3</span>
<span class="t" style="left:571.97px;top:376.00px;font-size:13.2px;font-weight:700;transform:scaleX(1.0263);">No</span>
<span class="t" style="left:601.47px;top:376.00px;font-size:13.2px;font-weight:700;transform:scaleX(0.9648);">Jawaban</span>
<span class="t" style="left:577.79px;top:397.00px;font-size:12.8px;transform:scaleX(1.0700);">1</span>
<span class="t" style="left:577.79px;top:417.00px;font-size:12.8px;transform:scaleX(1.0700);">2</span>
<span class="t" style="left:577.79px;top:437.00px;font-size:12.8px;transform:scaleX(1.0700);">3</span>
<span class="t" style="left:577.79px;top:457.00px;font-size:12.8px;transform:scaleX(1.0700);">4</span>
<span class="t" style="left:577.79px;top:477.00px;font-size:12.8px;transform:scaleX(1.0700);">5</span>
<span class="t" style="left:577.79px;top:497.00px;font-size:12.8px;transform:scaleX(1.0700);">6</span>
<span class="t" style="left:577.79px;top:517.00px;font-size:12.8px;transform:scaleX(1.0700);">7</span>
<span class="t" style="left:577.79px;top:537.00px;font-size:12.8px;transform:scaleX(1.0700);">8</span>
<span class="t" style="left:577.79px;top:557.00px;font-size:12.8px;transform:scaleX(1.0700);">9</span>
<span class="t" style="left:574.29px;top:577.00px;font-size:12.8px;transform:scaleX(1.0274);">10</span>
<span class="t" style="left:574.29px;top:597.00px;font-size:12.8px;transform:scaleX(1.0998);">11</span>
<span class="t" style="left:574.29px;top:617.00px;font-size:12.8px;transform:scaleX(1.0274);">12</span>
<span class="t" style="left:574.29px;top:637.00px;font-size:12.8px;transform:scaleX(1.0274);">13</span>
<div class="r" style="left:685px;top:344px;width:93px;height:27px;background:#c4d79b;"></div>
<div class="r" style="left:685px;top:372px;width:32px;height:219px;background:#b8cce4;"></div>
<div class="r" style="left:718px;top:372px;width:60px;height:19px;background:#fcd5b4;"></div>
<div class="r" style="left:718px;top:392px;width:60px;height:199px;background:#fcd5b4;"></div>
<div class="r" style="left:684px;top:343px;width:1px;height:249px;background:#000;"></div>
<div class="r" style="left:778px;top:343px;width:1px;height:249px;background:#000;"></div>
<div class="r" style="left:717px;top:371px;width:1px;height:221px;background:#000;"></div>
<div class="r" style="left:684px;top:371px;width:95px;height:1px;background:#000;"></div>
<div class="r" style="left:684px;top:391px;width:95px;height:1px;background:#000;"></div>
<div class="r" style="left:684px;top:411px;width:95px;height:1px;background:#000;"></div>
<div class="r" style="left:684px;top:431px;width:95px;height:1px;background:#000;"></div>
<div class="r" style="left:684px;top:451px;width:95px;height:1px;background:#000;"></div>
<div class="r" style="left:684px;top:471px;width:95px;height:1px;background:#000;"></div>
<div class="r" style="left:684px;top:491px;width:95px;height:1px;background:#000;"></div>
<div class="r" style="left:684px;top:511px;width:95px;height:1px;background:#000;"></div>
<div class="r" style="left:684px;top:531px;width:95px;height:1px;background:#000;"></div>
<div class="r" style="left:684px;top:551px;width:95px;height:1px;background:#000;"></div>
<div class="r" style="left:684px;top:571px;width:95px;height:1px;background:#000;"></div>
<div class="r" style="left:684px;top:591px;width:95px;height:1px;background:#000;"></div>
<span class="t" style="left:693.24px;top:351.00px;font-size:14px;font-weight:700;transform:scaleX(0.9347);">SUB TEST 4</span>
<span class="t" style="left:691.97px;top:376.00px;font-size:13.2px;font-weight:700;transform:scaleX(1.0263);">No</span>
<span class="t" style="left:721.47px;top:376.00px;font-size:13.2px;font-weight:700;transform:scaleX(0.9648);">Jawaban</span>
<span class="t" style="left:697.79px;top:397.00px;font-size:12.8px;transform:scaleX(1.0700);">1</span>
<span class="t" style="left:697.79px;top:417.00px;font-size:12.8px;transform:scaleX(1.0700);">2</span>
<span class="t" style="left:697.79px;top:437.00px;font-size:12.8px;transform:scaleX(1.0700);">3</span>
<span class="t" style="left:697.79px;top:457.00px;font-size:12.8px;transform:scaleX(1.0700);">4</span>
<span class="t" style="left:697.79px;top:477.00px;font-size:12.8px;transform:scaleX(1.0700);">5</span>
<span class="t" style="left:697.79px;top:497.00px;font-size:12.8px;transform:scaleX(1.0700);">6</span>
<span class="t" style="left:697.79px;top:517.00px;font-size:12.8px;transform:scaleX(1.0700);">7</span>
<span class="t" style="left:697.79px;top:537.00px;font-size:12.8px;transform:scaleX(1.0700);">8</span>
<span class="t" style="left:697.79px;top:557.00px;font-size:12.8px;transform:scaleX(1.0700);">9</span>
<span class="t" style="left:694.29px;top:577.00px;font-size:12.8px;transform:scaleX(1.0274);">10</span>
<span class="t" style="left:3.18px;top:377.00px;font-size:12.9px;transform:scaleX(1.0361);">Nama</span>
<span class="t" style="left:3.18px;top:397.00px;font-size:12.9px;transform:scaleX(1.0273);">Kelas</span>
<span class="t" style="left:2.98px;top:417.00px;font-size:12.9px;transform:scaleX(1.0480);">Sekolah</span>
<span class="t" style="left:2.78px;top:437.00px;font-size:12.9px;transform:scaleX(1.0596);">Jenis Kelamin</span>
<span class="t" style="left:3.18px;top:457.00px;font-size:12.9px;transform:scaleX(1.0352);">Tanggal Lahir</span>
<span class="t" style="left:3.18px;top:477.00px;font-size:12.9px;transform:scaleX(1.0302);">Tanggal Tes</span>
<span class="t" style="left:2.98px;top:497.00px;font-size:12.9px;">Usia</span>
<span class="t" style="left:2.98px;top:557.00px;font-size:12.9px;transform:scaleX(1.0383);">Skor</span>
<span class="t" style="left:3.18px;top:577.00px;font-size:12.9px;transform:scaleX(1.0678);">IQ</span>
<span class="t" style="left:2.88px;top:597.00px;font-size:12.9px;transform:scaleX(1.0920);">Kategori</span>
<span class="t" style="left:2.74px;top:351.00px;font-size:14px;font-weight:700;transform:scaleX(0.9830);">IDENTITAS</span>
<span class="t" style="left:3.14px;top:525.00px;font-size:14px;font-weight:700;transform:scaleX(0.9314);">HASIL</span>
<span class="t" style="left:117.78px;top:417.00px;font-size:12.9px;transform:scaleX(1.0855);">cemerlang</span>
<span class="t" style="left:117.81px;top:436.00px;font-size:12.2px;transform:scaleX(1.1489);">Laki-laki</span>
<span class="t" style="left:117.81px;top:456.00px;font-size:12.2px;transform:scaleX(1.0496);">08 Juni 1983</span>
<span class="t" style="left:117.81px;top:476.00px;font-size:12.2px;transform:scaleX(1.0555);">10 Januari 2023</span>
<span class="t" style="left:121.71px;top:497.00px;font-size:12.2px;transform:scaleX(1.0674);">39</span>
<span class="t" style="left:143.91px;top:497.00px;font-size:12.2px;transform:scaleX(1.1402);">Tahun</span>
<span class="t" style="left:195.11px;top:497.00px;font-size:12.2px;transform:scaleX(1.0582);">7</span>
<span class="t" style="left:213.91px;top:497.00px;font-size:12.2px;transform:scaleX(1.1092);">Bulan</span>
<span class="t" style="left:261.71px;top:497.00px;font-size:12.2px;transform:scaleX(1.0730);">2</span>
<span class="t" style="left:280.71px;top:497.00px;font-size:12.2px;transform:scaleX(1.1081);">Hari</span>
<span class="t" style="left:208.35px;top:556.00px;font-size:13.8px;font-weight:700;transform:scaleX(1.1843);">0</span>
<span class="t" style="left:204.75px;top:576.00px;font-size:13.8px;font-weight:700;transform:scaleX(1.0745);">38</span>
<span class="t" style="left:149.05px;top:596.00px;font-size:13.8px;font-weight:700;transform:scaleX(1.0724);">Mentally Defective</span>
<div class="r" style="left:97px;top:436px;width:13px;height:13px;background:#fff;border:1px solid #000;box-sizing:border-box;"></div>
<div class="r" style="left:114px;top:370px;width:198px;height:23px;border:2px solid #217346;box-sizing:border-box;"></div>
<div class="r" style="left:116px;top:372px;width:194px;height:19px;border:1px solid #fff;box-sizing:border-box;"></div>
<div class="r" style="left:307px;top:388px;width:6px;height:6px;background:#fff;"></div>
<div class="r" style="left:308px;top:389px;width:5px;height:5px;background:#217346;"></div>
<div class="r" style="left:2px;top:628px;width:107px;height:36px;background:#f0f0f0;box-sizing:border-box;border-left:1px solid #fff;border-top:1px solid #fff;border-right:1px solid #696969;border-bottom:1px solid #696969;"></div>
<div class="r" style="left:3px;top:629px;width:105px;height:34px;box-sizing:border-box;border-right:1px solid #a0a0a0;border-bottom:1px solid #a0a0a0;"></div>
<span class="t" style="left:5.83px;top:639.00px;font-size:14.2px;font-weight:700;transform:scaleX(0.9610);">SAVE TO DATA</span>
<div class="r" style="left:113px;top:628px;width:106px;height:36px;background:#f0f0f0;box-sizing:border-box;border-left:1px solid #fff;border-top:1px solid #fff;border-right:1px solid #696969;border-bottom:1px solid #696969;"></div>
<div class="r" style="left:114px;top:629px;width:104px;height:34px;box-sizing:border-box;border-right:1px solid #a0a0a0;border-bottom:1px solid #a0a0a0;"></div>
<span class="t" style="left:121.43px;top:639.00px;font-size:14.2px;font-weight:700;transform:scaleX(0.9425);">SAVE TO PDF</span>
<div class="r" style="left:224px;top:628px;width:86px;height:36px;background:#f0f0f0;box-sizing:border-box;border-left:1px solid #fff;border-top:1px solid #fff;border-right:1px solid #696969;border-bottom:1px solid #696969;"></div>
<div class="r" style="left:225px;top:629px;width:84px;height:34px;box-sizing:border-box;border-right:1px solid #a0a0a0;border-bottom:1px solid #a0a0a0;"></div>
<span class="t" style="left:245.83px;top:639.00px;font-size:14.2px;font-weight:700;transform:scaleX(0.8662);">CLEAR</span>
<div class="r" style="left:973px;top:280px;width:22px;height:594px;background:#e6e6e6;"></div>
<div class="r" style="left:977px;top:282px;width:15px;height:578px;background:#d8d8d8;"></div>
<div class="r" style="left:977px;top:282px;width:15px;height:15px;background:#fff;border:1px solid #ababab;box-sizing:border-box;"></div>
<svg class="r" style="left:977px;top:282px;" width="15" height="15" viewBox="0 0 15 15"><path d="M4 9h7l-3.500-4z" fill="#777"/></svg>
<div class="r" style="left:977px;top:298px;width:15px;height:543px;background:#fff;border:1px solid #ababab;box-sizing:border-box;"></div>
<div class="r" style="left:977px;top:859px;width:15px;height:15px;background:#fff;border:1px solid #ababab;box-sizing:border-box;"></div>
<svg class="r" style="left:977px;top:859px;" width="15" height="15" viewBox="0 0 15 15"><path d="M4 6h7l-3.500 4z" fill="#777"/></svg>
<div class="r" style="left:1px;top:874px;width:994px;height:27px;background:#e6e6e6;"></div>
<svg class="r" style="left:28px;top:882px;" width="6" height="9" viewBox="0 0 6 9"><path d="M4.500 0.800v7.400l-4-3.700z" fill="#c1c1c1"/></svg>
<svg class="r" style="left:56.5px;top:882px;" width="6" height="9" viewBox="0 0 6 9"><path d="M0.500 0.800v7.400l4-3.700z" fill="#c1c1c1"/></svg>
<div class="r" style="left:101px;top:877px;width:1px;height:20px;background:#ababab;"></div>
<span class="t" style="left:113.91px;top:881.00px;font-size:12.3px;color:#444;transform:scaleX(0.9745);">README</span>
<div class="r" style="left:178px;top:873px;width:52px;height:23px;background:#fff;border-left:1px solid #ababab;border-right:1px solid #ababab;box-sizing:border-box;"></div>
<div class="r" style="left:178px;top:896px;width:52px;height:2px;background:#217346;"></div>
<span class="t" style="left:190.31px;top:881.00px;font-size:12.3px;font-weight:700;color:#217346;transform:scaleX(0.9911);">CFIT</span>
<span class="t" style="left:242.01px;top:881.00px;font-size:12.3px;color:#444;transform:scaleX(0.9615);">PRINT</span>
<div class="r" style="left:291px;top:877px;width:1px;height:20px;background:#ababab;"></div>
<span class="t" style="left:304.71px;top:881.00px;font-size:12.3px;color:#444;transform:scaleX(1.0355);">DATA</span>
<div class="r" style="left:350px;top:877px;width:1px;height:20px;background:#ababab;"></div>
<svg class="r" style="left:384px;top:879px;" width="16" height="16" viewBox="0 0 16 16"><circle cx="8" cy="8" r="7" fill="none" stroke="#6b6b6b" stroke-width="1.100"/><path d="M8 4v8M4 8h8" stroke="#6b6b6b" stroke-width="1.300"/></svg>
<div class="r" style="left:597px;top:882px;width:2px;height:2px;background:#a6a6a6;"></div>
<div class="r" style="left:597px;top:886px;width:2px;height:2px;background:#a6a6a6;"></div>
<div class="r" style="left:597px;top:890px;width:2px;height:2px;background:#a6a6a6;"></div>
<div class="r" style="left:615px;top:880px;width:359px;height:15px;background:#d8d8d8;"></div>
<div class="r" style="left:615px;top:880px;width:14px;height:15px;background:#fff;border:1px solid #ababab;box-sizing:border-box;"></div>
<svg class="r" style="left:615px;top:880px;" width="14" height="15" viewBox="0 0 14 15"><path d="M8.500 4v7l-4-3.500z" fill="#777"/></svg>
<div class="r" style="left:629px;top:880px;width:317px;height:15px;background:#fff;border:1px solid #ababab;box-sizing:border-box;"></div>
<div class="r" style="left:959px;top:880px;width:15px;height:15px;background:#fff;border:1px solid #ababab;box-sizing:border-box;"></div>
<svg class="r" style="left:959px;top:880px;" width="15" height="15" viewBox="0 0 15 15"><path d="M6 4v7l4-3.500z" fill="#777"/></svg>
<div class="r" style="left:1px;top:901px;width:994px;height:1px;background:#c6c6c6;"></div>
<div class="r" style="left:1px;top:902px;width:994px;height:21px;background:#f3f2f1;"></div>
<span class="t" style="left:9.08px;top:908.00px;font-size:10.4px;color:#444;transform:scaleX(1.0428);">Ready</span>
<svg class="r" style="left:59px;top:906px;" width="16" height="13" viewBox="0 0 16 13"><path d="M0.500 0.500h13v10.500h-13z M0.500 2.500h13" fill="none" stroke="#444"/><path d="M2.500 5h3 M2.500 7h2 M2.500 9h2" stroke="#444"/><circle cx="9.700" cy="8.300" r="3.900" fill="#f3f2f1" stroke="#444" stroke-width="1.100"/><circle cx="9.700" cy="8.300" r="1.600" fill="#444"/></svg>
<div class="r" style="left:684px;top:902px;width:40px;height:21px;background:#cbcac9;"></div>
<svg class="r" style="left:697px;top:905px;" width="14" height="14" viewBox="0 0 14 14"><path d="M0.500 0.500h12v12h-12z M4.500 0.500v12 M8.500 0.500v12 M0.500 4.500h12 M0.500 8.500h12" fill="#e4e3e2" stroke="#444" stroke-width="1.200"/></svg>
<svg class="r" style="left:737px;top:905px;" width="15" height="14" viewBox="0 0 15 14"><path d="M0.500 0.500h13v12h-13z" fill="#fff" stroke="#444" stroke-width="1.200"/><path d="M3.500 2.500h7v8h-7z" fill="none" stroke="#444" stroke-width="1.100"/><path d="M5.500 4.500h3 M5.500 6.500h3 M5.500 8.500h3" fill="none" stroke="#444"/></svg>
<svg class="r" style="left:777px;top:905px;" width="15" height="14" viewBox="0 0 15 14"><path d="M0.500 0.500h13v12h-13z" fill="#fff" stroke="#444" stroke-width="1.200"/><path d="M4.500 0.500v7 M8.500 0.500v7 M0.500 7.500h8.500" fill="none" stroke="#444" stroke-width="1.100"/></svg>
<div class="r" style="left:810px;top:911px;width:8px;height:1px;background:#444;"></div>
<div class="r" style="left:823px;top:911px;width:100px;height:1px;background:#9a9a9a;"></div>
<div class="r" style="left:870.5px;top:906px;width:5px;height:12px;background:#6b6b6b;"></div>
<div class="r" style="left:927px;top:911px;width:9px;height:1px;background:#444;"></div>
<div class="r" style="left:931px;top:907px;width:1px;height:9px;background:#444;"></div>
<span class="t" style="left:949.08px;top:908.00px;font-size:10.4px;color:#444;transform:scaleX(1.0359);">100%</span>
</div></div>
<div id="frame"></div>
</body></html>
